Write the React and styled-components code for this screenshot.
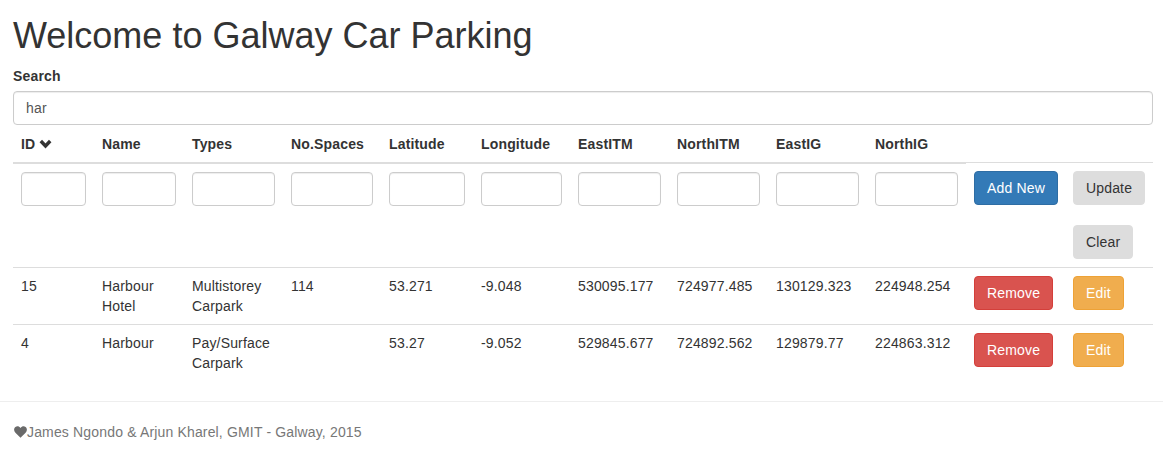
import React from "react";
import styled, { createGlobalStyle } from "styled-components";

const GlobalStyle = createGlobalStyle`
  * {
    box-sizing: border-box;
  }
  body {
    margin: 0;
    font-family: "Liberation Sans", Arial, Helvetica, sans-serif;
    font-size: 14px;
    line-height: 1.42857143;
    letter-spacing: 0.16px;
    color: #333;
    background: #fff;
  }
`;

const Container = styled.div`
  width: 1140px;
  margin-left: 13px;
`;

const Title = styled.h1`
  font-size: 36px;
  font-weight: 500;
  line-height: 1.1;
  letter-spacing: 0;
  margin: 16px 0 10px;
`;

const FormGroup = styled.div`
  margin-bottom: 0;
`;

const Label = styled.label`
  display: inline-block;
  font-weight: bold;
  margin-bottom: 5px;
`;

const Input = styled.input`
  display: block;
  width: 100%;
  height: 34px;
  padding: 6px 12px;
  font-family: inherit;
  font-size: 14px;
  line-height: 1.42857143;
  letter-spacing: inherit;
  color: #555;
  background: #fff;
  border: 1px solid #ccc;
  border-radius: 4px;
  box-shadow: inset 0 1px 1px rgba(0, 0, 0, 0.075);
  outline: none;
`;

const Table = styled.table`
  width: 100%;
  table-layout: fixed;
  border-collapse: collapse;
  border-spacing: 0;
  margin-bottom: 20px;
`;

const Th = styled.th`
  text-align: left;
  font-weight: bold;
  padding: 9px 8px 8px;
  vertical-align: bottom;
  border-bottom: 2px solid #ddd;
  white-space: nowrap;
`;

const Td = styled.td`
  padding: 8px;
  vertical-align: top;
  border-top: 1px solid #ddd;
`;

const ButtonStack = styled.div`
  display: flex;
  flex-wrap: wrap;
  align-items: flex-start;
  row-gap: 20px;
`;

const tones = {
  primary: { bg: "#337ab7", border: "#2e6da4", color: "#fff" },
  danger: { bg: "#d9534f", border: "#d43f3a", color: "#fff" },
  warning: { bg: "#f0ad4e", border: "#eea236", color: "#fff" },
  muted: { bg: "#dddddd", border: "#dddddd", color: "#333" },
};

const Button = styled.button`
  display: inline-block;
  padding: 6px 12px;
  font-family: inherit;
  font-size: 14px;
  line-height: 1.42857143;
  letter-spacing: inherit;
  border-radius: 4px;
  border: 1px solid ${(p) => tones[p.$tone].border};
  background: ${(p) => tones[p.$tone].bg};
  color: ${(p) => tones[p.$tone].color};
  white-space: nowrap;
  cursor: pointer;
`;

const Chevron = styled.svg`
  display: inline-block;
  margin-left: 4px;
  vertical-align: 0px;
`;

const Footer = styled.footer`
  color: #777;
`;

const Rule = styled.hr`
  margin: 20px 0;
  border: 0;
  border-top: 1px solid #eee;
`;

const FooterText = styled.p`
  margin: 0 0 10px 14px;
  display: flex;
  align-items: center;
`;

const Heart = styled.svg`
  flex: none;
`;

const widths = [81, 90, 99, 98, 92, 97, 99, 99, 99, 99, 99, 88];

const headers = [
  "ID",
  "Name",
  "Types",
  "No.Spaces",
  "Latitude",
  "Longitude",
  "EastITM",
  "NorthITM",
  "EastIG",
  "NorthIG",
];

const rows = [
  {
    id: "15",
    name: "Harbour Hotel",
    type: "Multistorey Carpark",
    spaces: "114",
    lat: "53.271",
    lng: "-9.048",
    eastItm: "530095.177",
    northItm: "724977.485",
    eastIg: "130129.323",
    northIg: "224948.254",
  },
  {
    id: "4",
    name: "Harbour",
    type: "Pay/Surface Carpark",
    spaces: "",
    lat: "53.27",
    lng: "-9.052",
    eastItm: "529845.677",
    northItm: "724892.562",
    eastIg: "129879.77",
    northIg: "224863.312",
  },
];

export default function App() {
  return (
    <>
      <GlobalStyle />
      <Container>
        <Title>Welcome to Galway Car Parking</Title>
        <FormGroup>
          <Label htmlFor="search">Search</Label>
          <Input id="search" defaultValue="har" />
        </FormGroup>
        <Table>
          <colgroup>
            {widths.map((w, i) => (
              <col key={i} style={{ width: w }} />
            ))}
          </colgroup>
          <thead>
            <tr>
              {headers.map((h) => (
                <Th key={h}>
                  {h}
                  {h === "ID" && (
                    <Chevron width="13" height="10" viewBox="0 0 13 10">
                      <polyline
                        points="1.8,2 6.5,7 11.2,2"
                        fill="none"
                        stroke="#333"
                        strokeWidth="3.4"
                      />
                    </Chevron>
                  )}
                </Th>
              ))}
            </tr>
          </thead>
          <tbody>
            <tr>
              {headers.map((h) => (
                <Td key={h}>
                  <Input />
                </Td>
              ))}
              <Td>
                <Button $tone="primary">Add New</Button>
              </Td>
              <Td>
                <ButtonStack>
                  <Button $tone="muted">Update</Button>
                  <Button $tone="muted">Clear</Button>
                </ButtonStack>
              </Td>
            </tr>
            {rows.map((r) => (
              <tr key={r.id}>
                <Td>{r.id}</Td>
                <Td>{r.name}</Td>
                <Td>{r.type}</Td>
                <Td>{r.spaces}</Td>
                <Td>{r.lat}</Td>
                <Td>{r.lng}</Td>
                <Td>{r.eastItm}</Td>
                <Td>{r.northItm}</Td>
                <Td>{r.eastIg}</Td>
                <Td>{r.northIg}</Td>
                <Td>
                  <Button $tone="danger">Remove</Button>
                </Td>
                <Td>
                  <Button $tone="warning">Edit</Button>
                </Td>
              </tr>
            ))}
          </tbody>
        </Table>
      </Container>
      <Footer>
        <Rule />
        <FooterText>
          <Heart width="13" height="12" viewBox="0 0 24 22">
            <path
              d="M12 21.5 L2.6 12.4 C-0.6 9.2 -0.6 4.2 2.6 1.8 C5.6 -0.4 9.6 0.4 12 3.6 C14.4 0.4 18.4 -0.4 21.4 1.8 C24.6 4.2 24.6 9.2 21.4 12.4 Z"
              fill="#6a6a6a"
            />
          </Heart>
          James Ngondo &amp; Arjun Kharel, GMIT - Galway, 2015
        </FooterText>
      </Footer>
    </>
  );
}
